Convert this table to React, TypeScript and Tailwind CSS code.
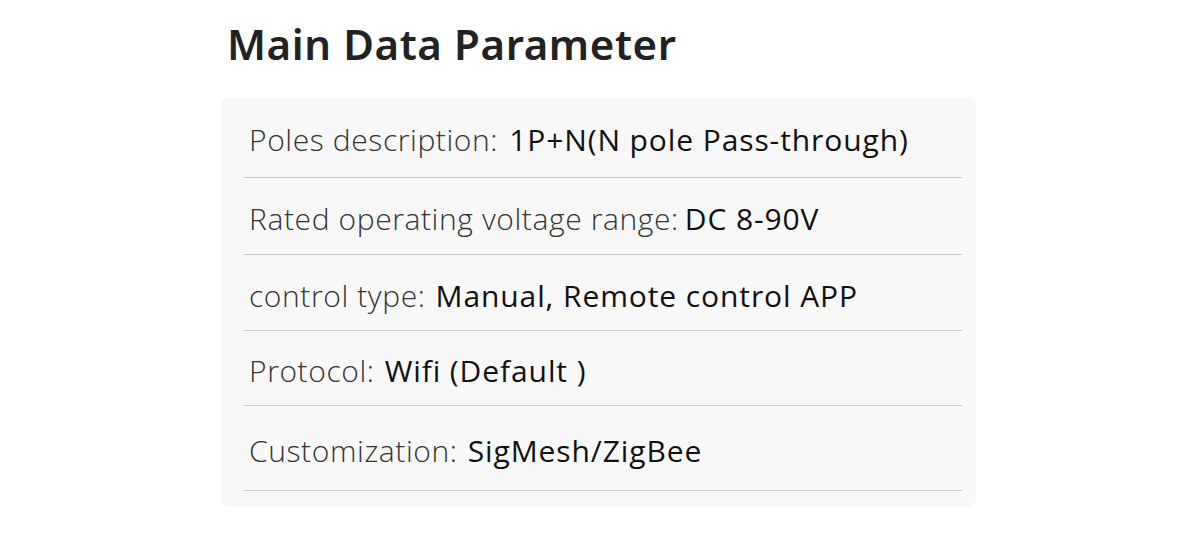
const rows = [
  { label: "Poles description:", value: "1P+N(N pole Pass-through)", h: "h-[81px]", gap: "ml-[11px]" },
  { label: "Rated operating voltage range:", value: "DC 8-90V", h: "h-[77px]", gap: "ml-[6px]" },
  { label: "control type:", value: "Manual, Remote control APP", h: "h-[76px]", gap: "ml-[10px]" },
  { label: "Protocol:", value: "Wifi (Default )", h: "h-[75px]", gap: "ml-[10px]" },
  { label: "Customization:", value: "SigMesh/ZigBee", h: "h-[85px]", gap: "ml-[10px]" },
];

export default function App() {
  return (
    <div className="w-[1200px] h-[545px] bg-white font-['Open_Sans',sans-serif] text-[#222]">
      <div className="w-[755px] ml-[221px] pt-[14px]">
        <h1 className="pl-[6px] text-[42px] leading-[60px] tracking-[0.6px] font-semibold text-[#222] font-['Noto_Sans',sans-serif]">
          Main Data Parameter
        </h1>
        <div className="mt-[23px] bg-[#f8f8f8] rounded-[8px] pb-[16px]">
          {rows.map((r, i) => (
            <div
              key={i}
              className={`${r.h} ml-[23px] mr-[14px] border-b border-[#c9c9c9] flex items-center pt-[6px] pl-[5px] text-[30px] leading-none whitespace-nowrap`}
            >
              <span className="font-light text-[#333] tracking-[0.6px]">{r.label}</span>
              <span className={`${r.gap} font-normal text-[#111] tracking-[0.9px]`}>{r.value}</span>
            </div>
          ))}
        </div>
      </div>
    </div>
  );
}
